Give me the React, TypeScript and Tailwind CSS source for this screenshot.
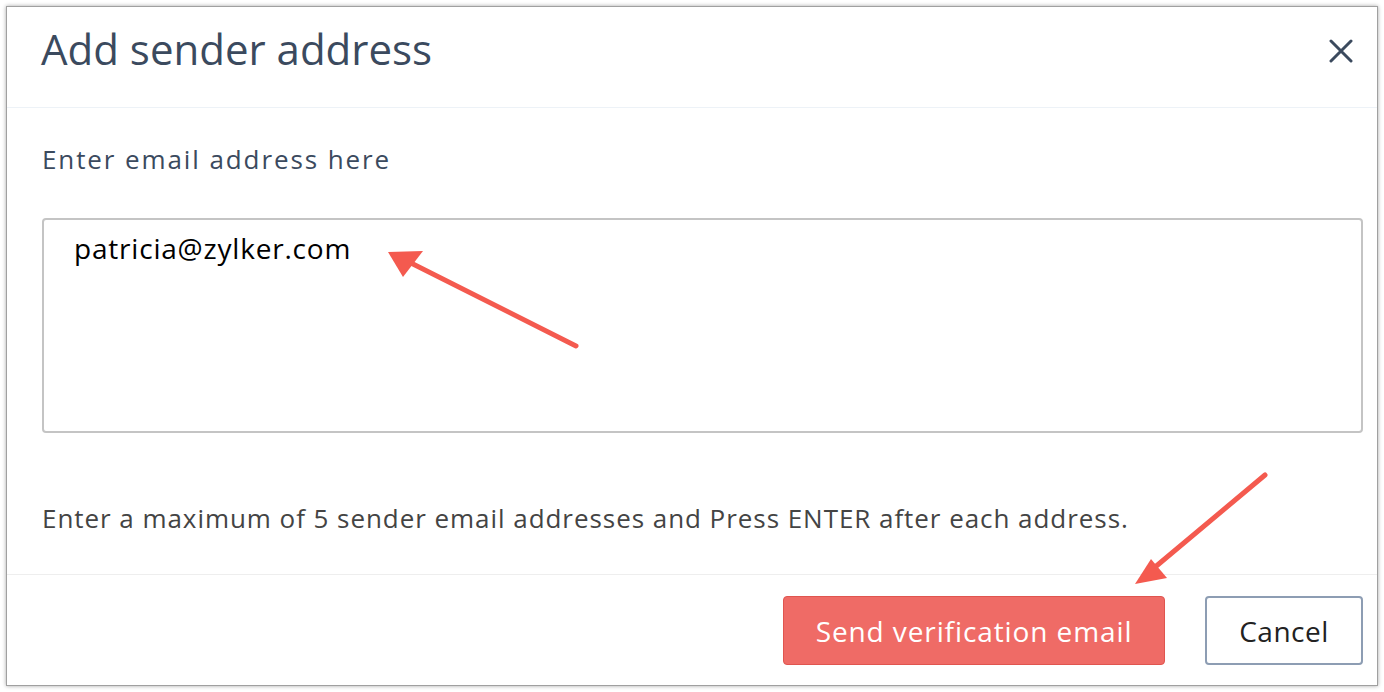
import type React from "react"

const Arrows: React.FC = () => (
  <svg className="pointer-events-none absolute inset-0" width="1384" height="692" viewBox="0 0 1384 692">
    {/* arrow to email */}
    <line x1="576" y1="346" x2="405" y2="260" stroke="#f45a4f" strokeWidth="5" strokeLinecap="round" />
    <polygon points="388,252 423,251 403,277" fill="#f45a4f" />
    {/* arrow to button */}
    <line x1="1265" y1="475" x2="1148" y2="573" stroke="#f45a4f" strokeWidth="5" strokeLinecap="round" />
    <polygon points="1135,584 1151,559 1167,578" fill="#f45a4f" />
  </svg>
)

const App: React.FC = () => {
  return (
    <div className="relative h-[692px] w-[1384px] bg-white p-[6px]" style={{ fontFamily: '"Open Sans", "Noto Sans", sans-serif' }}>
      <div className="flex h-full flex-col border border-[#a0a0a0] bg-white shadow-[0_0_4px_rgba(0,0,0,0.35)]">
        {/* Header */}
        <div className="flex h-[101px] items-center justify-between border-b border-[#edf2f7] pl-[34px] pr-[24px]">
          <h1 className="mb-[16px] text-[42px] leading-none text-[#3b4a5e]">Add sender address</h1>
          <svg width="24" height="24" viewBox="0 0 24 24" className="mb-[12px]">
            <path d="M2 2 L22 22 M22 2 L2 22" stroke="#3b4a5e" strokeWidth="3" strokeLinecap="round" />
          </svg>
        </div>

        {/* Body */}
        <div className="flex flex-1 flex-col pl-[35px] pr-[14px] pt-[34px]">
          <label className="text-[26px] leading-[34px] tracking-[1.9px] text-[#3b4a5e]">Enter email address here</label>
          <div className="mt-[42px] h-[215px] rounded-[4px] border-2 border-[#c4c4c4] px-[30px] pt-[9px]">
            <span className="text-[28px] leading-[38px] tracking-[0.8px] text-black">patricia@zylker.com</span>
          </div>
          <p className="mt-[69px] text-[26px] leading-[32px] tracking-[0.95px] text-[#444]">
            Enter a maximum of 5 sender email addresses and Press ENTER after each address.
          </p>
        </div>

        {/* Footer */}
        <div className="flex h-[111px] items-center justify-end gap-[40px] border-t border-[#eeeeee] pr-[14px] pt-[1px]">
          <button className="h-[69px] w-[382px] rounded-[4px] border border-[#e0554f] bg-[#ef6b66] text-[28px] tracking-[0.9px] text-white">
            Send verification email
          </button>
          <button className="h-[69px] w-[158px] rounded-[4px] border-2 border-[#8d9db3] bg-white text-[28px] tracking-[0.5px] text-[#222]">
            Cancel
          </button>
        </div>
      </div>
      <Arrows />
    </div>
  )
}

export default App
